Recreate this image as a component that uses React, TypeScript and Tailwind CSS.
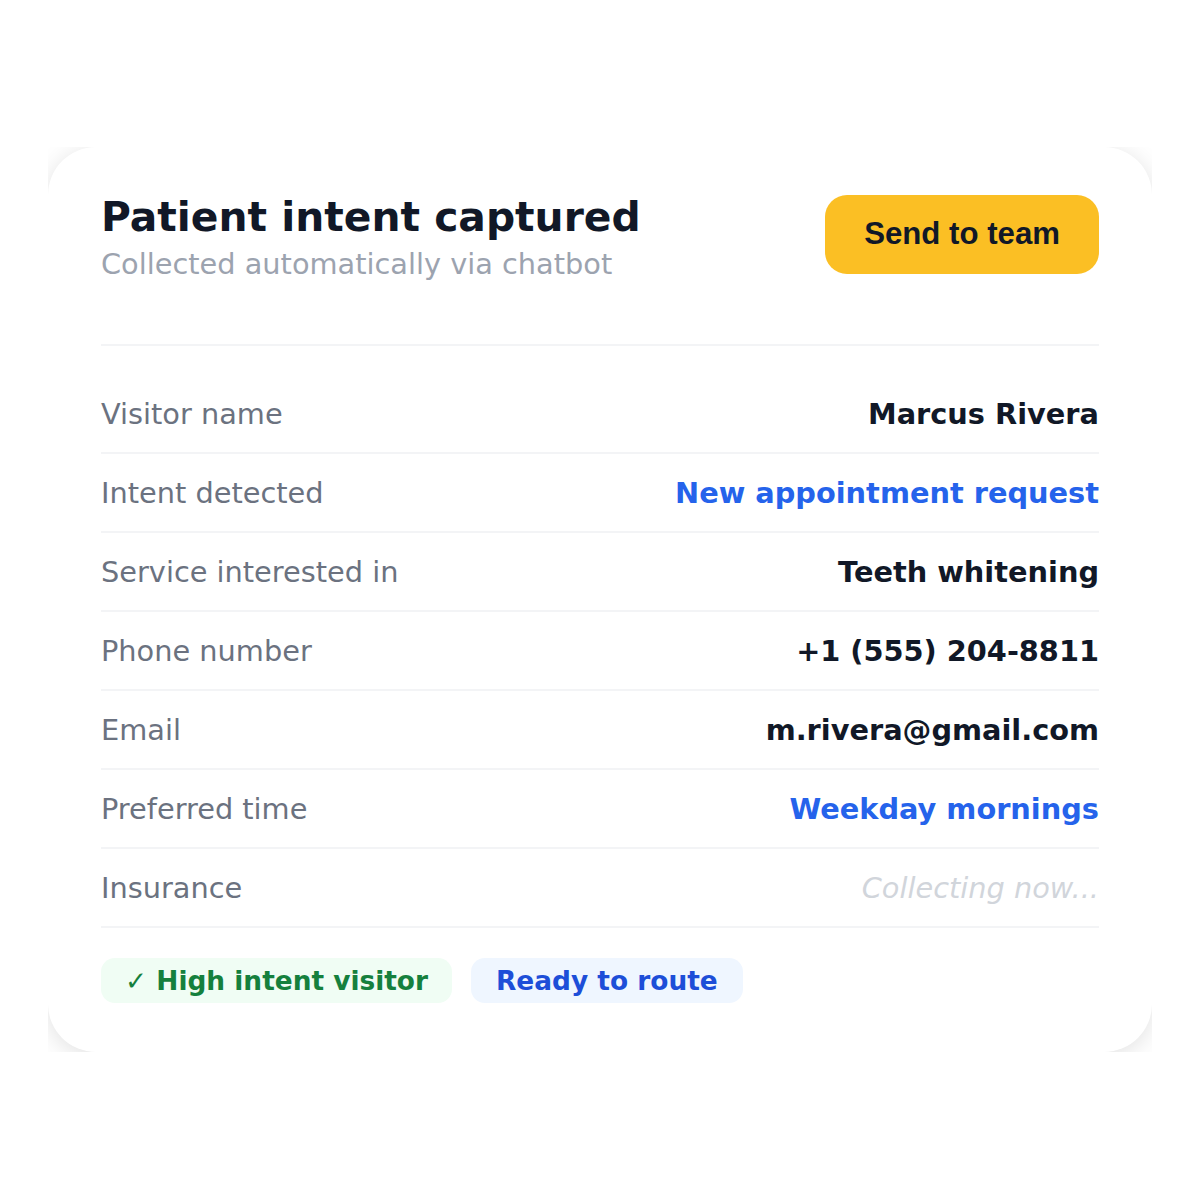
import React from "react";

const rows: { label: string; value: string; kind: "dark" | "blue" | "muted" }[] = [
  { label: "Visitor name", value: "Marcus Rivera", kind: "dark" },
  { label: "Intent detected", value: "New appointment request", kind: "blue" },
  { label: "Service interested in", value: "Teeth whitening", kind: "dark" },
  { label: "Phone number", value: "+1 (555) 204-8811", kind: "dark" },
  { label: "Email", value: "m.rivera@gmail.com", kind: "dark" },
  { label: "Preferred time", value: "Weekday mornings", kind: "blue" },
  { label: "Insurance", value: "Collecting now...", kind: "muted" },
];

export default function App() {
  return (
    <div
      className="w-[1200px] h-[1200px] bg-white flex justify-center pt-[147px]"
      style={{ fontFamily: '"DejaVu Sans", sans-serif' }}
    >
      <div className="w-[1104px] h-[905px] overflow-hidden">
        <div className="bg-white rounded-[48px] shadow-[0_4px_24px_rgba(0,0,0,0.12)] px-[53px] pt-[46px] pb-[49px]">
          <div className="flex items-start justify-between pb-[63px] border-b-2 border-[#f3f4f6]">
            <div className="flex flex-col gap-[6px]">
              <div className="text-[40.8px] leading-[48px] font-bold text-[#111827]">
                Patient intent captured
              </div>
              <div className="text-[28.8px] leading-[34px] text-[#9ca3af]">
                Collected automatically via chatbot
              </div>
            </div>
            <button
              className="mt-[2px] bg-[#fbbf24] rounded-[22px] px-[39px] h-[79px] text-[31.2px] font-bold text-[#111827]"
              style={{ fontFamily: '"Liberation Sans", Arial, sans-serif' }}
            >
              Send to team
            </button>
          </div>
          <div className="mt-[29px]">
            {rows.map((r) => (
              <div
                key={r.label}
                className="flex items-center justify-between h-[79px] border-b-2 border-[#f3f4f6]"
              >
                <span className="text-[28.8px] leading-[34px] text-[#6b7280]">{r.label}</span>
                <span
                  className={
                    r.kind === "dark"
                      ? "text-[28.8px] leading-[34px] font-bold text-[#111827]"
                      : r.kind === "blue"
                      ? "text-[28.8px] leading-[34px] font-bold text-[#2563eb]"
                      : "text-[28.8px] leading-[34px] italic text-[#d1d5db]"
                  }
                >
                  {r.value}
                </span>
              </div>
            ))}
          </div>
          <div className="flex gap-[19px] mt-[30px]">
            <span className="bg-[#f0fdf4] text-[#15803d] rounded-[14px] px-[24px] h-[45px] flex items-center text-[26.4px] font-bold">
              ✓ High intent visitor
            </span>
            <span className="bg-[#eff6ff] text-[#1d4ed8] rounded-[14px] px-[25px] h-[45px] flex items-center text-[26.4px] font-bold">
              Ready to route
            </span>
          </div>
        </div>
      </div>
    </div>
  );
}
